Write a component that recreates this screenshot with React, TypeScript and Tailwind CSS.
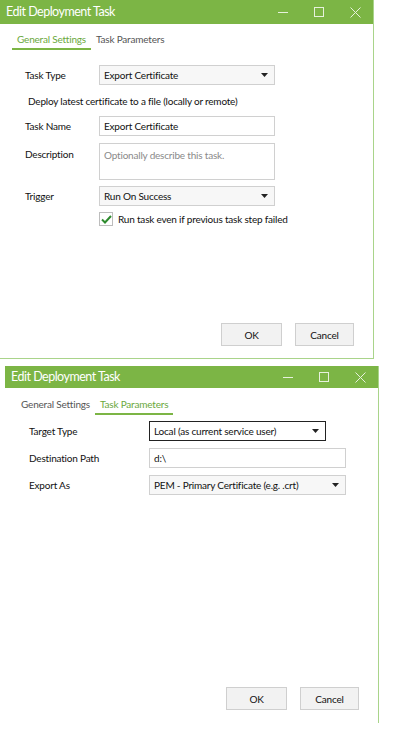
import { FunctionComponent, ReactNode } from "react";

const font = "font-['Lato',_'Noto_Sans',_sans-serif]";

const TitleBar: FunctionComponent<{ h: string }> = ({ h }) => (
  <div className={`${h} bg-[#7cb545] flex flex-row items-center justify-between shrink-0`}>
    <div className="pl-[6px] text-[12.5px] tracking-[-0.5px] text-white">Edit Deployment Task</div>
    <div className="flex flex-row items-center h-full">
      <div className="w-[36px] flex items-center justify-center">
        <div className="w-[10px] h-px bg-[#e6f1dc]" />
      </div>
      <div className="w-[36px] flex items-center justify-center">
        <div className="w-[10px] h-[10px] border border-[#e6f1dc]" />
      </div>
      <div className="w-[36px] flex items-center justify-center">
        <svg width="11" height="11" viewBox="0 0 11 11">
          <path d="M0.5 0.5 L10.5 10.5 M10.5 0.5 L0.5 10.5" stroke="#e6f1dc" strokeWidth="1" />
        </svg>
      </div>
    </div>
  </div>
);

const Tabs: FunctionComponent<{ active: number }> = ({ active }) => (
  <div className="flex flex-row leading-[16px]">
    {["General Settings", "Task Parameters"].map((t, i) => (
      <div
        key={t}
        className={
          i === active
            ? "px-[5px] pb-[1px] border-b-2 border-[#7cb545] text-[#6aa83c]"
            : "px-[5px] pb-[1px] border-b-2 border-transparent text-[#555555]"
        }
      >
        {t}
      </div>
    ))}
  </div>
);

const Arrow = () => (
  <svg width="7" height="4" viewBox="0 0 7 4">
    <path d="M0 0 L7 0 L3.5 4 Z" fill="#222222" />
  </svg>
);

const Select: FunctionComponent<{ w: string; focus?: boolean; children: ReactNode }> = ({ w, focus, children }) => (
  <div
    className={`${w} h-[20px] flex flex-row items-center justify-between pl-[4px] pr-[6px] border whitespace-nowrap ${
      focus ? "border-[#222222] bg-white" : "border-[#d0d0d0] bg-[#f7f7f7]"
    }`}
  >
    <span>{children}</span>
    <Arrow />
  </div>
);

const Input: FunctionComponent<{ w: string; h?: string; placeholder?: boolean; children?: ReactNode }> = ({
  w,
  h = "h-[20px]",
  placeholder,
  children,
}) => (
  <div
    className={`${w} ${h} border border-[#d0d0d0] bg-white pl-[4px] whitespace-nowrap ${
      placeholder ? "pt-[3px] text-[#8a8a8a]" : "flex items-center"
    }`}
  >
    {children}
  </div>
);

const Buttons = () => (
  <div className="flex flex-row justify-end gap-[13px]">
    <div className="w-[61px] h-[23px] bg-[#f2f2f2] border border-[#cfcfcf] flex items-center justify-center">OK</div>
    <div className="w-[59px] h-[23px] bg-[#f2f2f2] border border-[#cfcfcf] flex items-center justify-center">Cancel</div>
  </div>
);

export default function App() {
  return (
    <div
      className={`w-[397px] h-[750px] bg-white text-[10px] tracking-[-0.2px] leading-[16px] text-[#111111] ${font} flex flex-col`}
    >
      {/* window 1 */}
      <div className="w-[374px] h-[359px] flex flex-col border-r border-b border-[#a9d48a]">
        <TitleBar h="h-[24px]" />
        <div className="flex-1 flex flex-col pl-[12px] pt-[7px]">
          <Tabs active={0} />
          <div className="flex flex-row items-center mt-[15px] pl-[13px]">
            <div className="w-[74px]">Task Type</div>
            <Select w="w-[176px]">Export Certificate</Select>
          </div>
          <div className="mt-[8px] pl-[16px]">Deploy latest certificate to a file (locally or remote)</div>
          <div className="flex flex-row items-center mt-[7px] pl-[13px]">
            <div className="w-[74px]">Task Name</div>
            <Input w="w-[176px]">Export Certificate</Input>
          </div>
          <div className="flex flex-row items-start mt-[7px] pl-[13px]">
            <div className="w-[74px] pt-[3px]">Description</div>
            <Input w="w-[176px]" h="h-[37px]" placeholder>
              Optionally describe this task.
            </Input>
          </div>
          <div className="flex flex-row items-center mt-[6px] pl-[13px]">
            <div className="w-[74px]">Trigger</div>
            <Select w="w-[176px]">Run On Success</Select>
          </div>
          <div className="flex flex-row items-center mt-[5px] pl-[87px] gap-[5px]">
            <div className="w-[14px] h-[14px] border border-[#bdbdbd] bg-white flex items-center justify-center">
              <svg width="11" height="9" viewBox="0 0 11 9">
                <path d="M1 4.5 L4 7.5 L10 1" stroke="#2e8b2e" strokeWidth="2" fill="none" />
              </svg>
            </div>
            <span>Run task even if previous task step failed</span>
          </div>
          <div className="flex-1" />
          <div className="pr-[19px] pb-[12px]">
            <Buttons />
          </div>
        </div>
      </div>

      {/* window 2 */}
      <div className="ml-[5px] mt-[7px] w-[374px] h-[357px] flex flex-col border-r border-[#a9d48a]">
        <TitleBar h="h-[22px]" />
        <div className="flex-1 flex flex-col pl-[11px] pt-[8px]">
          <Tabs active={1} />
          <div className="flex flex-row items-center mt-[6px] pl-[13px]">
            <div className="w-[120px]">Target Type</div>
            <Select w="w-[177px]" focus>
              Local (as current service user)
            </Select>
          </div>
          <div className="flex flex-row items-center mt-[7px] pl-[13px]">
            <div className="w-[120px]">Destination Path</div>
            <Input w="w-[197px]">d:\</Input>
          </div>
          <div className="flex flex-row items-center mt-[7px] pl-[13px]">
            <div className="w-[120px]">Export As</div>
            <Select w="w-[197px]">PEM - Primary Certificate (e.g. .crt)</Select>
          </div>
          <div className="flex-1" />
          <div className="pr-[19px] pb-[13px]">
            <Buttons />
          </div>
        </div>
      </div>
    </div>
  );
}
